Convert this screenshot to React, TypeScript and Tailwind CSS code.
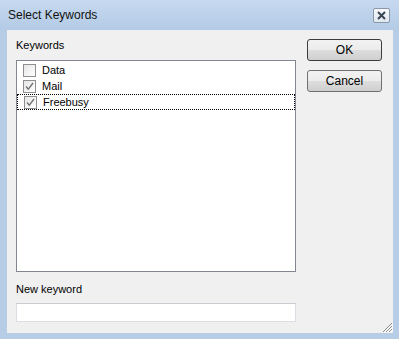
import React from 'react';

const items = [
  { label: 'Data', checked: false },
  { label: 'Mail', checked: true },
  { label: 'Freebusy', checked: true, focused: true },
];

function CheckBox({ checked }: { checked: boolean }) {
  return (
    <div className="flex h-[13px] w-[13px] items-center justify-center border border-[#8f8f8f] bg-gradient-to-br from-[#e6e6e6] to-[#ffffff]">
      {checked && (
        <svg width="11" height="11" viewBox="0 0 11 11">
          <path d="M2 5.5 L4.3 8.2 L9 2" fill="none" stroke="#707070" strokeWidth="1.3" />
        </svg>
      )}
    </div>
  );
}

function WinButton({ label, isDefault }: { label: string; isDefault?: boolean }) {
  return (
    <button
      className={`h-[22px] w-[75px] rounded-[3px] border ${
        isDefault ? 'border-[#3c3c3c]' : 'border-[#707070]'
      } bg-[linear-gradient(to_bottom,#f2f2f2_0%,#ebebeb_50%,#dddddd_51%,#cfcfcf_100%)] text-[12px] leading-[20px] text-black`}
    >
      {label}
    </button>
  );
}

export default function App() {
  return (
    <div className="flex h-[339px] w-[399px] flex-col bg-[#b7cde6] font-['Liberation_Sans',Arial,sans-serif] text-[11px] text-black">
      {/* Title bar */}
      <div className="flex h-[30px] items-center justify-between bg-gradient-to-b from-[#c6d9ef] to-[#b4cbe6] pl-[8px] pr-[9px]">
        <span className="text-[12px] text-[#111]">Select Keywords</span>
        <div className="flex h-[15px] w-[17px] items-center justify-center rounded-[2px] border border-[#8a97a8] bg-gradient-to-b from-[#f7f9fb] to-[#dfe6ee]">
          <svg width="9" height="9" viewBox="0 0 9 9">
            <path d="M1 1 L8 8 M8 1 L1 8" stroke="#3a4553" strokeWidth="2" />
          </svg>
        </div>
      </div>

      {/* Client area */}
      <div className="relative mb-[6px] ml-[7px] mr-[6px] flex flex-1 bg-[#f0f0f0]">
        <div className="ml-[9px] flex w-[280px] flex-col pt-[7px]">
          <div className="h-[16px] leading-[16px]">Keywords</div>
          <div className="mt-[7px] h-[212px] border border-[#828790] bg-white pt-[1px]">
            {items.map((it) => (
              <div
                key={it.label}
                className={`flex h-[16px] items-center pl-[6px] ${
                  it.focused ? 'border border-dotted border-black pl-[5px]' : ''
                }`}
              >
                <CheckBox checked={it.checked} />
                <span className="ml-[6px] leading-[16px]">{it.label}</span>
              </div>
            ))}
          </div>
          <div className="mt-[9px] h-[16px] leading-[16px]">New keyword</div>
          <div className="mt-[6px] h-[19px] border border-[#dadde2] border-t-[#c9ccd1] bg-white" />
        </div>

        <div className="ml-[11px] flex flex-col pt-[9px]">
          <WinButton label="OK" isDefault />
          <div className="mt-[9px]">
            <WinButton label="Cancel" />
          </div>
        </div>

        {/* Resize grip */}
        <svg className="absolute bottom-0 right-0" width="12" height="12" viewBox="0 0 12 12">
          <path d="M11 2 L2 11 M11 5 L5 11 M11 8 L8 11" stroke="#8c8c8c" strokeWidth="1" />
          <path d="M12 3 L3 12 M12 6 L6 12 M12 9 L9 12" stroke="#ffffff" strokeWidth="1" />
        </svg>
      </div>
    </div>
  );
}
